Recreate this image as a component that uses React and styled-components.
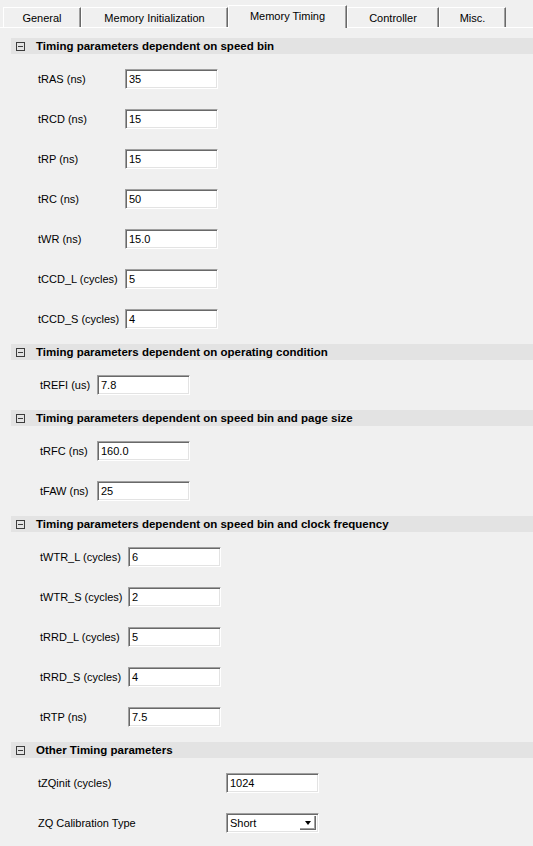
import React from "react";
import styled, { createGlobalStyle } from "styled-components";

const GlobalStyle = createGlobalStyle`
  html, body { margin: 0; padding: 0; background: #f0f0f0; }
  body { font-family: "Liberation Sans", Arial, sans-serif; font-size: 11px; color: #000; }
  * { box-sizing: border-box; }
`;

const Page = styled.div`
  width: 533px;
  height: 846px;
  background: #f0f0f0;
  overflow: hidden;
`;

const TabStrip = styled.div`
  display: flex;
  align-items: flex-end;
  height: 28px;
  padding-left: 3px;
  border-bottom: 1px solid #ffffff;
`;

const Tab = styled.div`
  position: relative;
  width: ${(p) => p.$w}px;
  height: ${(p) => (p.$active ? 23 : 20)}px;
  margin-bottom: ${(p) => (p.$active ? -1 : 0)}px;
  z-index: ${(p) => (p.$active ? 2 : 1)};
  background: #f0f0f0;
  border-top: 1px solid #ffffff;
  border-left: 1px solid #ffffff;
  border-right: 1px solid #696969;
  box-shadow: inset -1px 0 0 #a0a0a0;
  display: flex;
  align-items: ${(p) => (p.$active ? "flex-start" : "center")};
  padding-top: ${(p) => (p.$active ? 4 : 0)}px;
  justify-content: center;
  font-size: 11px;
  color: #000;
`;

const Pane = styled.div`
  padding: 10px 0 0 11px;
`;

const SectionHeader = styled.div`
  height: 16px;
  background: #e3e3e3;
  display: flex;
  align-items: center;
  padding-left: 5px;
  font-weight: bold;
  font-size: 11.5px;
`;

const CollapseBox = styled.span`
  width: 9px;
  height: 9px;
  border: 1px solid #3c3c3c;
  margin-right: 11px;
  position: relative;
  flex: none;
  &::after {
    content: "";
    position: absolute;
    left: 1px;
    right: 1px;
    top: 3px;
    height: 1px;
    background: #3c3c3c;
  }
`;

const Rows = styled.div`
  display: grid;
  grid-template-columns: ${(p) => p.$label}px 93px;
  row-gap: 20px;
  padding: 15px 0 15px ${(p) => p.$indent}px;
`;

const Label = styled.div`
  height: 20px;
  display: flex;
  align-items: center;
  white-space: nowrap;
`;

const Field = styled.div`
  height: 20px;
  background: #fff;
  border-top: 1px solid #a0a0a0;
  border-left: 1px solid #a0a0a0;
  border-bottom: 1px solid #ffffff;
  border-right: 1px solid #ffffff;
  box-shadow: inset 1px 1px 0 #696969, inset -1px -1px 0 #e3e3e3;
  display: flex;
  align-items: center;
  padding-left: 3px;
  position: relative;
`;

const DropButton = styled.span`
  position: absolute;
  right: 2px;
  top: 2px;
  width: 16px;
  height: 14px;
  background: #fff;
  border-right: 1px solid #696969;
  border-bottom: 1px solid #696969;
  box-shadow: inset -1px -1px 0 #a0a0a0;
  display: flex;
  align-items: center;
  justify-content: center;
  &::after {
    content: "";
    border-left: 3.5px solid transparent;
    border-right: 3.5px solid transparent;
    border-top: 4px solid #000;
    margin-top: 1px;
  }
`;

const tabs = [
  { name: "General", w: 78 },
  { name: "Memory Initialization", w: 147 },
  { name: "Memory Timing", w: 119, active: true },
  { name: "Controller", w: 92 },
  { name: "Misc.", w: 67 },
];

const sections = [
  {
    title: "Timing parameters dependent on speed bin",
    label: 87,
    indent: 27,
    rows: [
      ["tRAS (ns)", "35"],
      ["tRCD (ns)", "15"],
      ["tRP (ns)", "15"],
      ["tRC (ns)", "50"],
      ["tWR (ns)", "15.0"],
      ["tCCD_L (cycles)", "5"],
      ["tCCD_S (cycles)", "4"],
    ],
  },
  {
    title: "Timing parameters dependent on operating condition",
    label: 57,
    indent: 29,
    rows: [["tREFI (us)", "7.8"]],
  },
  {
    title: "Timing parameters dependent on speed bin and page size",
    label: 57,
    indent: 29,
    rows: [
      ["tRFC (ns)", "160.0"],
      ["tFAW (ns)", "25"],
    ],
  },
  {
    title: "Timing parameters dependent on speed bin and clock frequency",
    label: 88,
    indent: 29,
    rows: [
      ["tWTR_L (cycles)", "6"],
      ["tWTR_S (cycles)", "2"],
      ["tRRD_L (cycles)", "5"],
      ["tRRD_S (cycles)", "4"],
      ["tRTP (ns)", "7.5"],
    ],
  },
  {
    title: "Other Timing parameters",
    label: 188,
    indent: 27,
    rows: [
      ["tZQinit (cycles)", "1024"],
      ["ZQ Calibration Type", "Short", true],
    ],
  },
];

export default function App() {
  return (
    <Page>
      <GlobalStyle />
      <TabStrip>
        {tabs.map((t) => (
          <Tab key={t.name} $w={t.w} $active={t.active}>
            {t.name}
          </Tab>
        ))}
      </TabStrip>
      <Pane>
        {sections.map((s) => (
          <section key={s.title}>
            <SectionHeader>
              <CollapseBox />
              {s.title}
            </SectionHeader>
            <Rows $label={s.label} $indent={s.indent}>
              {s.rows.map(([l, v, sel]) => (
                <React.Fragment key={l}>
                  <Label>{l}</Label>
                  <Field>
                    {v}
                    {sel && <DropButton />}
                  </Field>
                </React.Fragment>
              ))}
            </Rows>
          </section>
        ))}
      </Pane>
    </Page>
  );
}
